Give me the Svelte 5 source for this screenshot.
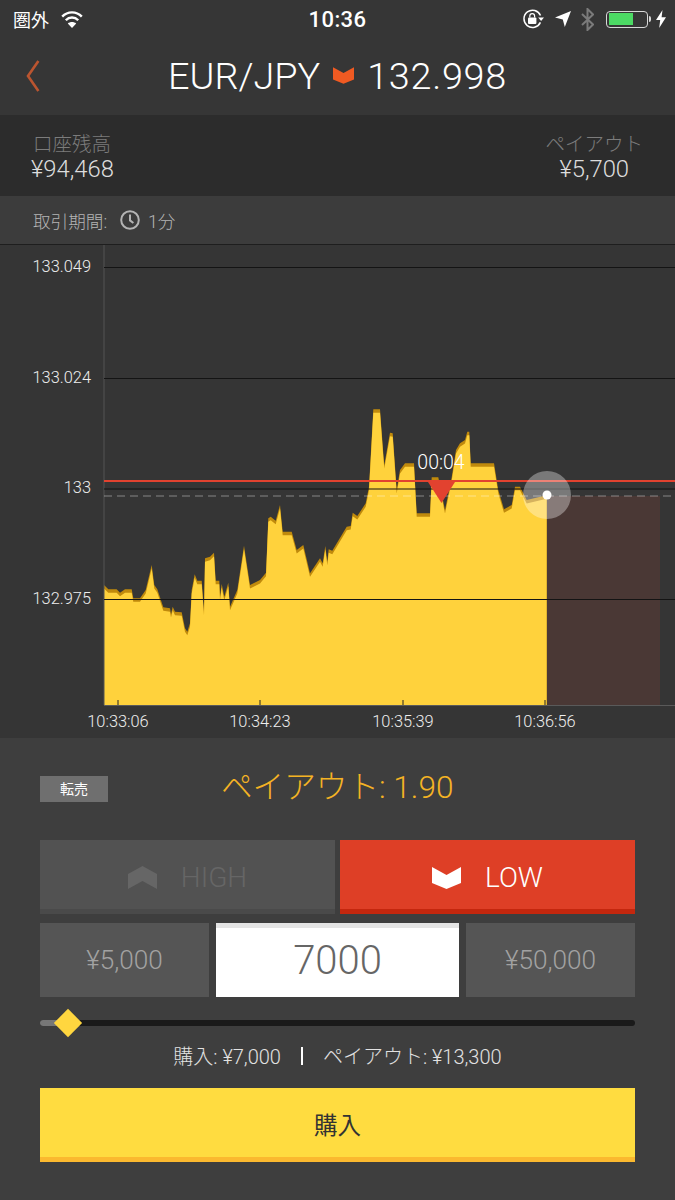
<script>
	// top edge of the price area, traced left to right
	const points = [
		[104, 585], [108.3, 589.3], [116.7, 589.3], [120, 592.7], [125, 589.3], [131.7, 589.3], [133.3, 598.3],
		[140, 598.3], [145.7, 590], [151.7, 565], [154.3, 585], [157.3, 589.3], [163.3, 607.3], [170, 608.3],
		[171, 614], [172.7, 606.7], [175, 611.7], [181.7, 612.3], [185, 628.3], [187.3, 631.7], [190, 623.3],
		[191.7, 590], [194.7, 574.3], [197.3, 580.7], [201.7, 580.7], [204, 611.7], [205, 558.3], [210, 556.7],
		[214, 552.7], [215.7, 580.7], [219.3, 580.7], [220, 596.7], [221.7, 584], [224.3, 596.7], [228.3, 582.7],
		[230, 606.7], [237.3, 590], [244, 545.7], [250, 585], [260, 580], [266, 572.7], [268.3, 518.3],
		[270.7, 516.7], [275.7, 520.7], [280, 505], [282.7, 531.7], [291.7, 531.7], [296.7, 550], [303.3, 545],
		[310, 573.3], [320, 558.3], [322.7, 563.3], [325.3, 546], [327.3, 561.7], [328.7, 549.3], [332.3, 550.7],
		[346.7, 526.7], [350.7, 526], [352.7, 512.7], [357.3, 516], [365.7, 503.3], [369, 486.7], [373.3, 409.3],
		[380, 409.3], [383.3, 453.3], [384.3, 465], [390, 432.7], [392.7, 433.3], [396.7, 490], [400, 470],
		[405, 463.3], [414, 463.3], [416.7, 513.3], [430, 513.3], [431.7, 477.3], [438.3, 477.3], [445, 510],
		[451.7, 477.3], [456, 450], [460, 443.3], [465, 440], [467.3, 431.7], [469.3, 431.7], [470.7, 463.3],
		[494, 463.3], [498.3, 490], [504, 509.3], [511.7, 505], [515, 486.7], [520, 486.7], [526.7, 500],
		[546.7, 495.3]
	];

	const toArea = (shift) =>
		'104,705 ' + points.map(([x, y]) => `${x},${y + shift}`).join(' ') + ' 546.7,705';

	const edge = toArea(0);
	const fill = toArea(3.5);

	const prices = [
		{ label: '133.049', y: 267.5 },
		{ label: '133.024', y: 378.5 },
		{ label: '133', y: 489 },
		{ label: '132.975', y: 599.5 }
	];

	const times = [
		{ label: '10:33:06', x: 118 },
		{ label: '10:34:23', x: 260 },
		{ label: '10:35:39', x: 403 },
		{ label: '10:36:56', x: 545 }
	];
</script>

<div class="page">
	<div class="top">
		<div class="status">
			<div class="status-left">
				<span class="carrier">圏外</span>
				<svg width="22" height="18" viewBox="0 0 22 18" fill="none" stroke="#fff" stroke-width="2.4">
					<path d="M1.2 6.6 C6.6 1 15.4 1 20.8 6.6" />
					<path d="M4.8 10.2 C8.2 6.6 13.8 6.6 17.2 10.2" />
					<path d="M11 18 L6.8 13.4 C9 11.4 13 11.4 15.2 13.4 Z" fill="#fff" stroke="none" />
				</svg>
			</div>
			<span class="clock-time">10:36</span>
			<div class="status-right">
				<svg width="23" height="20" viewBox="0 0 23 20" fill="none" stroke="#fff" stroke-width="1.5">
					<path d="M18.5 6.5 A8.6 8.6 0 1 0 18.4 13.4" />
					<path d="M16.2 8.6 H22 L19.1 12 Z" fill="#fff" stroke="none" />
					<rect x="6" y="8.6" width="8.4" height="6.4" rx="1" fill="#fff" stroke="none" />
					<path d="M7.8 8.6 V7 A2.4 2.4 0 0 1 12.6 7 V8.6" stroke-width="1.2" />
				</svg>
				<svg class="arrow" width="16" height="16" viewBox="0 0 16 16">
					<path d="M16 0 L9.8 16 L7.8 8.4 L0 6.6 Z" fill="#fff" />
				</svg>
				<svg class="bt" width="13" height="23" viewBox="0 0 13 23" fill="none" stroke="#7b7b7b" stroke-width="2">
					<path d="M1 6 L12 16.5 L6.5 22 V1 L12 6.5 L1 17" />
				</svg>
				<div class="battery">
					<div class="battery-level"></div>
				</div>
				<span class="battery-tip"></span>
				<svg class="bolt" width="10" height="18" viewBox="0 0 10 18">
					<path d="M6.5 0 L0 10 H4.2 L3.2 18 L10 7.2 H5.6 Z" fill="#fff" />
				</svg>
			</div>
		</div>

		<header class="title-bar">
			<svg class="back" width="14" height="32" viewBox="0 0 14 32" fill="none" stroke="#bb5530" stroke-width="2.6">
				<path d="M12.4 1 L2 16 L12.4 31" />
			</svg>
			<h1>
				<span>EUR/JPY</span>
				<svg width="21" height="17" viewBox="0 0 29 23">
					<path d="M0 0 L14.5 8 L29 0 V17 L14.5 23 L0 17 Z" fill="#f05a22" />
				</svg>
				<span class="quote">132.998</span>
			</h1>
		</header>
	</div>

	<section class="account">
		<div class="balance">
			<span class="caption">口座残高</span>
			<span class="amount">¥94,468</span>
		</div>
		<div class="payout">
			<span class="caption">ペイアウト</span>
			<span class="amount">¥5,700</span>
		</div>
	</section>

	<section class="period">
		<span>取引期間:</span>
		<svg width="20" height="20" viewBox="0 0 20 20" fill="none" stroke="#b4b4b4" stroke-width="2">
			<circle cx="10" cy="10" r="8.8" />
			<path d="M10 4.6 V10.4 L13.4 13" />
		</svg>
		<span>1分</span>
	</section>

	<svg class="chart" width="675" height="493" viewBox="0 245 675 493">
		<rect x="547" y="496" width="113" height="209" fill="#4a3835" />

		<polygon points={edge} fill="#c08a0c" />
		<polygon points={fill} fill="#ffd23c" />

		<line x1="104" y1="245" x2="104" y2="705" stroke="#555" />
		<line x1="104" y1="705.5" x2="675" y2="705.5" stroke="#5a5a5a" />

		{#each prices as p}
			<line x1="104" y1={p.y} x2="675" y2={p.y} stroke="#141414" />
			<text class="axis-text" x="91" y={p.y + 4} text-anchor="end">{p.label}</text>
		{/each}

		{#each times as t}
			<line x1={t.x} y1="700" x2={t.x} y2="705" stroke="#222" />
			<text class="axis-text" x={t.x} y="726.5" text-anchor="middle">{t.label}</text>
		{/each}

		<line x1="104" y1="496" x2="675" y2="496" stroke="#fff" stroke-opacity="0.4" stroke-dasharray="8 5" />
		<line x1="104" y1="481" x2="675" y2="481" stroke="#e2422f" stroke-width="2" />

		<polygon points="428,482 455,482 441.5,503" fill="#e2422f" />
		<text class="countdown" x="441" y="469" text-anchor="middle">00:04</text>

		<circle cx="547" cy="495" r="24" fill="#fff" fill-opacity="0.34" />
		<circle cx="547" cy="495" r="4.5" fill="#fff" />
	</svg>

	<section class="panel">
		<div class="rate-row">
			<span class="resell">転売</span>
			<span class="rate">ペイアウト: 1.90</span>
		</div>

		<div class="direction">
			<button class="dir high">
				<svg width="29" height="23" viewBox="0 0 29 23">
					<path d="M14.5 0 L29 8 V23 L14.5 15 L0 23 V8 Z" fill="#666" />
				</svg>
				<span>HIGH</span>
			</button>
			<button class="dir low">
				<svg width="29" height="23" viewBox="0 0 29 23">
					<path d="M0 1 L14.5 9 L29 1 V17 L14.5 23 L0 17 Z" fill="#fff" />
				</svg>
				<span>LOW</span>
			</button>
		</div>

		<div class="amounts">
			<button class="preset">¥5,000</button>
			<div class="value">7000</div>
			<button class="preset">¥50,000</button>
		</div>

		<div class="slider">
			<div class="slider-fill"></div>
			<div class="slider-thumb"></div>
		</div>

		<div class="summary">
			<span>購入: ¥7,000</span>
			<i></i>
			<span>ペイアウト: ¥13,300</span>
		</div>

		<button class="buy">購入</button>
	</section>
</div>

<style>
	:global(body) {
		margin: 0;
		background: #3e3e3e;
	}

	.page {
		width: 675px;
		height: 1200px;
		overflow: hidden;
		display: flex;
		flex-direction: column;
		font-family: Roboto, 'Noto Sans CJK JP', sans-serif;
		font-weight: 300;
	}

	.top {
		height: 115px;
		background: #363636;
		color: #fff;
	}

	.status {
		height: 38px;
		display: grid;
		grid-template-columns: 1fr auto 1fr;
		align-items: center;
	}

	.status-left {
		display: flex;
		align-items: center;
		gap: 12px;
		padding-left: 13px;
	}

	.carrier {
		font-size: 18px;
		font-weight: 400;
	}

	.clock-time {
		font-size: 22px;
		font-weight: 500;
		letter-spacing: 0.4px;
	}

	.status-right {
		display: flex;
		align-items: center;
		justify-content: flex-end;
		padding-right: 9px;
	}

	.arrow {
		margin-left: 10px;
	}

	.bt {
		margin-left: 10px;
	}

	.battery {
		width: 42px;
		height: 17px;
		margin-left: 12px;
		box-sizing: border-box;
		border: 1.5px solid #d8d8d8;
		border-radius: 4px;
		padding: 1.5px;
	}

	.battery-level {
		width: 24px;
		height: 100%;
		background: #4cd964;
	}

	.battery-tip {
		width: 2px;
		height: 6px;
		margin-left: 1px;
		background: #d8d8d8;
		border-radius: 0 2px 2px 0;
	}

	.bolt {
		margin-left: 5px;
	}

	.title-bar {
		position: relative;
		height: 77px;
		display: flex;
		align-items: center;
		justify-content: center;
	}

	.back {
		position: absolute;
		left: 26px;
		top: 22px;
	}

	h1 {
		margin: 0 0 2px;
		display: flex;
		align-items: center;
		gap: 13px;
		font-size: 37.8px;
		font-weight: 300;
	}

	.quote {
		letter-spacing: 0.7px;
	}

	.account {
		height: 81px;
		box-sizing: border-box;
		padding: 18px 32px 0 31px;
		display: flex;
		justify-content: space-between;
		background: #2c2c2c;
	}

	.balance,
	.payout {
		display: flex;
		flex-direction: column;
	}

	.balance {
		align-items: flex-start;
	}

	.balance .caption {
		padding-left: 2px;
	}

	.payout {
		align-items: center;
	}

	.caption {
		font-size: 19.5px;
		line-height: 24px;
		color: #7c7c7c;
	}

	.amount {
		font-size: 23.8px;
		line-height: 25px;
		color: #ddd;
	}

	.period {
		height: 49px;
		box-sizing: border-box;
		padding: 0 33px 0;
		display: flex;
		align-items: center;
		gap: 13px;
		background: #3c3c3c;
		border-bottom: 1px solid #1e1e1e;
		color: #b4b4b4;
		font-size: 17.6px;
	}

	.period svg {
		margin-right: -5px;
	}

	.chart {
		display: block;
		flex: none;
		background: #353535;
	}

	.axis-text {
		font-size: 16.4px;
		font-weight: 300;
		fill: #eee;
	}

	.countdown {
		font-size: 19.5px;
		fill: #fff;
	}

	.panel {
		flex: 1;
		box-sizing: border-box;
		padding: 0 40px;
		background: #3e3e3e;
		display: flex;
		flex-direction: column;
	}

	button {
		border: 0;
		padding: 0;
		font: inherit;
	}

	.rate-row {
		height: 102px;
		box-sizing: border-box;
		padding-top: 21px;
		display: flex;
		align-items: flex-start;
	}

	.resell {
		width: 68px;
		height: 26px;
		margin-top: 17px;
		background: #6f6f6f;
		color: #fff;
		font-size: 14px;
		font-weight: 400;
		line-height: 26px;
		text-align: center;
	}

	.rate {
		margin-left: 113px;
		font-size: 31.6px;
		line-height: 57px;
		color: #f4b324;
	}

	.direction {
		display: grid;
		grid-template-columns: 295px 295px;
		gap: 5px;
	}

	.dir {
		height: 74px;
		box-sizing: border-box;
		padding-top: 5px;
		display: flex;
		align-items: center;
		justify-content: center;
		gap: 24px;
		font-size: 28px;
	}

	.high {
		background: #525252;
		border-bottom: 5px solid #4a4a4a;
		color: #666;
	}

	.low {
		background: #de3f26;
		border-bottom: 5px solid #c4270e;
		color: #fff;
	}

	.amounts {
		display: grid;
		grid-template-columns: 169px 243px 169px;
		gap: 7px;
		margin-top: 9px;
	}

	.preset {
		height: 74px;
		background: #555;
		color: #a2a2a2;
		font-size: 26.2px;
	}

	.value {
		height: 74px;
		box-sizing: border-box;
		border-top: 5px solid #e4e4e4;
		background: #fff;
		color: #666;
		font-size: 40px;
		line-height: 66px;
		text-align: center;
	}

	.slider {
		position: relative;
		height: 6px;
		margin-top: 23px;
		background: #1a1a1a;
		border-radius: 3px;
	}

	.slider-fill {
		width: 22px;
		height: 100%;
		background: #777;
		border-radius: 3px 0 0 3px;
	}

	.slider-thumb {
		position: absolute;
		left: 18px;
		top: -7px;
		width: 20px;
		height: 20px;
		background: #ffd63f;
		transform: rotate(45deg);
	}

	.summary {
		height: 62px;
		box-sizing: border-box;
		padding-bottom: 3px;
		display: flex;
		align-items: center;
		justify-content: center;
		gap: 20px;
		color: #e2e2e2;
		font-size: 20px;
	}

	.summary i {
		width: 2px;
		height: 18px;
		background: #fff;
	}

	.buy {
		height: 74px;
		box-sizing: border-box;
		padding-top: 3px;
		background: #ffdc40;
		border-bottom: 5px solid #fbb92f;
		color: #333;
		font-size: 23.5px;
		font-weight: 400;
	}
</style>
